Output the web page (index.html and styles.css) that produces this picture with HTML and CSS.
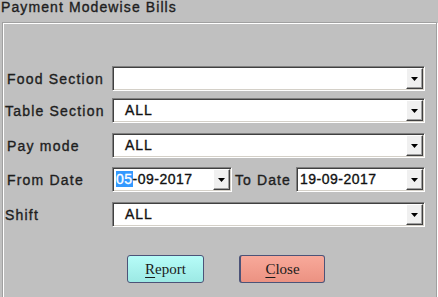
FILE: index.html
```html
<!DOCTYPE html>
<html>
<head>
<meta charset="utf-8">
<link rel="stylesheet" href="styles.css">
</head>
<body>
<div class="window">
  <div class="title">Payment Modewise Bills</div>
  <div class="group">
    <div class="form">
      <div class="row">
        <span class="lbl">Food Section</span>
        <div class="combo"><span class="val"></span><span class="dd"><svg width="7" height="4" viewBox="0 0 7 4"><polygon points="0,0 7,0 3.5,4" fill="#000"/></svg></span></div>
      </div>
      <div class="row r2">
        <span class="lbl lbl-l">Table Section</span>
        <div class="combo"><span class="val">ALL</span><span class="dd"><svg width="7" height="4" viewBox="0 0 7 4"><polygon points="0,0 7,0 3.5,4" fill="#000"/></svg></span></div>
      </div>
      <div class="row">
        <span class="lbl">Pay mode</span>
        <div class="combo"><span class="val">ALL</span><span class="dd"><svg width="7" height="4" viewBox="0 0 7 4"><polygon points="0,0 7,0 3.5,4" fill="#000"/></svg></span></div>
      </div>
      <div class="row row-date r4">
        <span class="lbl">From Date</span>
        <div class="combo date"><span class="val"><span class="sel">05</span>-09-2017</span><span class="dd"><svg width="7" height="4" viewBox="0 0 7 4"><polygon points="0,0 7,0 3.5,4" fill="#000"/></svg></span></div>
        <span class="lbl lbl-to">To Date</span>
        <div class="combo date"><span class="val">19-09-2017</span><span class="dd"><svg width="7" height="4" viewBox="0 0 7 4"><polygon points="0,0 7,0 3.5,4" fill="#000"/></svg></span></div>
      </div>
      <div class="row">
        <span class="lbl lbl-l">Shift</span>
        <div class="combo"><span class="val">ALL</span><span class="dd"><svg width="7" height="4" viewBox="0 0 7 4"><polygon points="0,0 7,0 3.5,4" fill="#000"/></svg></span></div>
      </div>
    </div>
    <div class="actions">
      <button class="btn btn-report"><u>R</u>eport</button>
      <button class="btn btn-close"><u>C</u>lose</button>
    </div>
  </div>
</div>
</body>
</html>
```
FILE: styles.css
```css
html, body {
  margin: 0;
  padding: 0;
}
body {
  background: #c0c0c0;
  width: 438px;
  height: 297px;
  overflow: hidden;
  font-family: "Liberation Sans", Arial, sans-serif;
  color: #1c1c1c;
}
.window {
  height: 297px;
  overflow: hidden;
}
.title {
  height: 22px;
  padding-left: 1px;
  font-size: 14px;
  font-weight: normal;
  line-height: 15px;
  letter-spacing: 1.1px;
  color: #1e1e1e;
  -webkit-text-stroke: 0.35px #1e1e1e;
}
.group {
  margin-left: 2px;
  width: 433px;
  height: 276px;
  border: 1px solid #a0a0a0;
  box-shadow: inset 1px 1px 0 #ffffff, 1px 1px 0 #ffffff;
}
.form {
  padding-top: 43px;
  display: flex;
  flex-direction: column;
  gap: 10px;
}
.row {
  display: grid;
  grid-template-columns: 109px 313px;
  align-items: center;
  height: 25px;
}
.r2 { margin-top: -3px; }
.r4 { margin-top: -1px; }
.row-date {
  grid-template-columns: 109px 120px 64px 129px;
}
.lbl {
  padding-left: 4px;
  font-size: 14px;
  font-weight: normal;
  letter-spacing: 1.2px;
  color: #1e1e1e;
  -webkit-text-stroke: 0.35px #1e1e1e;
  white-space: nowrap;
}
.lbl-l { padding-left: 2px; }
.lbl-to { padding-left: 3px; letter-spacing: 1.1px; }
.combo {
  box-sizing: border-box;
  height: 25px;
  display: flex;
  align-items: stretch;
  background: #ffffff;
  border-top: 1px solid #808080;
  border-left: 1px solid #808080;
  border-right: 1px solid #ffffff;
  border-bottom: 1px solid #ffffff;
  box-shadow: inset 1px 1px 0 #404040, inset -1px -1px 0 #d4d0c8;
}
.val {
  flex: 1;
  padding-left: 12px;
  font-size: 14px;
  font-weight: normal;
  letter-spacing: 1px;
  line-height: 23px;
  color: #111;
  -webkit-text-stroke: 0.35px #111;
  white-space: nowrap;
}
.date .val {
  padding-left: 3px;
  letter-spacing: 0.5px;
}
.sel {
  background: #3399ff;
  color: #ffffff;
  -webkit-text-stroke: 0.35px #ffffff;
}
.dd {
  box-sizing: border-box;
  width: 17px;
  margin: 1px 1px 1px 0;
  display: flex;
  align-items: center;
  justify-content: center;
  background: #f0f0f0;
  border-top: 1px solid #ffffff;
  border-left: 1px solid #ffffff;
  border-right: 1px solid #404040;
  border-bottom: 1px solid #404040;
  box-shadow: inset -1px -1px 0 #a0a0a0;
}
.dd svg { display: block; }
.actions {
  display: flex;
  gap: 35px;
  margin-top: 28px;
  padding-left: 124px;
}
.btn {
  box-sizing: border-box;
  height: 28px;
  padding: 0;
  font-family: "Liberation Serif", "Times New Roman", serif;
  font-size: 15px;
  color: #1a1a1a;
  border: 1px solid #4c5378;
  border-radius: 3px;
}
.btn u { text-underline-offset: 3px; }
.btn-report {
  width: 77px;
  background: linear-gradient(#b6fcf8, #9ce9e4);
}
.btn-close {
  width: 86px;
  border-left-width: 2px;
  background: linear-gradient(#f8a99a, #ec9282);
}
```
